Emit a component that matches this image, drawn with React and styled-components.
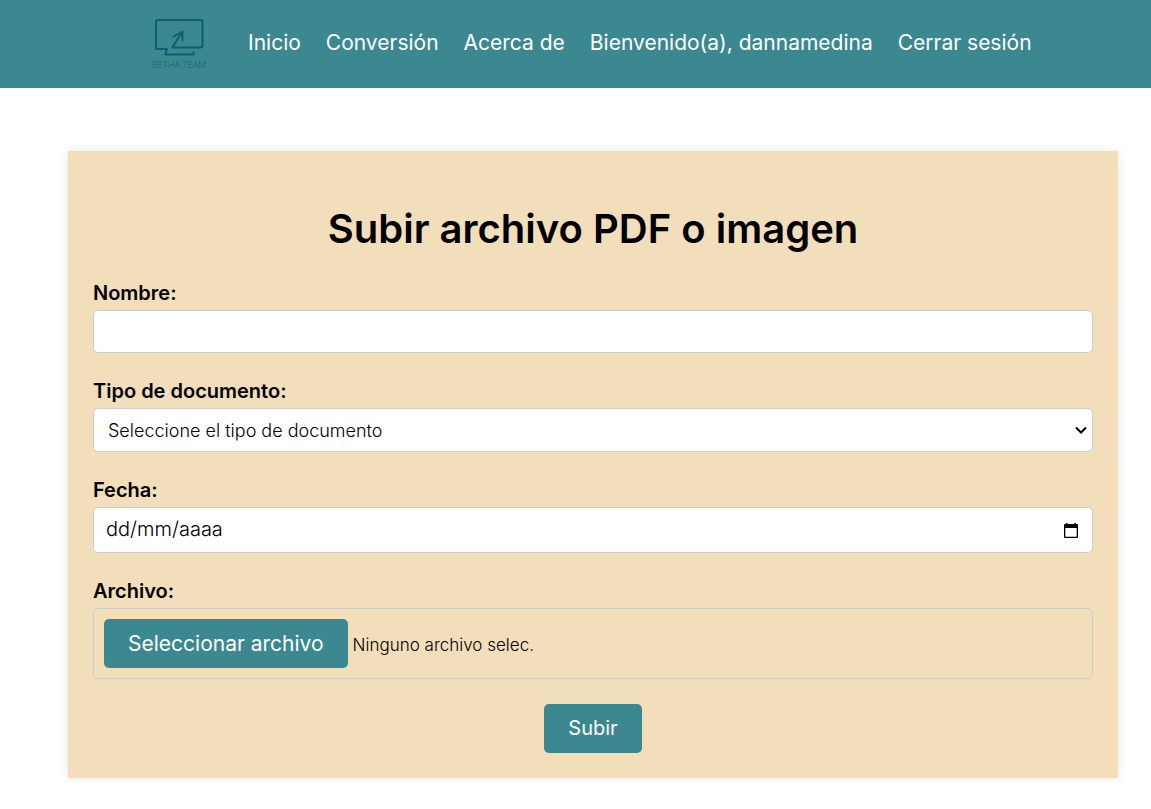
import React, { useState } from "react";
import styled, { createGlobalStyle } from "styled-components";

const teal = "#3b8890";
const sand = "#f2debb";

const GlobalStyle = createGlobalStyle`
  *, *::before, *::after { box-sizing: border-box; }
  body {
    margin: 0;
    background: #fff;
    color: #000;
    font-family: "Century Gothic", Inter, sans-serif;
    font-size: 18px;
  }
  input, select, button { font: inherit; color: inherit; }
`;

const Header = styled.header`
  background: ${teal};
  padding: 18px 100px 18px 152px;
`;

const Nav = styled.nav`
  display: flex;
  align-items: flex-start;
  gap: 42px;
`;

const LogoLink = styled.a`
  display: block;
  flex: none;
  height: 52px;
`;

const Menu = styled.ul`
  display: flex;
  flex-wrap: wrap;
  gap: 25px;
  margin: 0;
  padding: 12px 0 0;
  list-style: none;
`;

const NavLink = styled.a`
  display: block;
  color: #fff;
  font-size: 21px;
  line-height: 26px;
  text-decoration: none;
  white-space: nowrap;
`;

const Card = styled.main`
  margin: 63px 33px 31px 68px;
  padding: 25px;
  background: ${sand};
  box-shadow: 0 0 10px rgba(0, 0, 0, 0.1);
`;

const Title = styled.h1`
  margin: 28px 0 26px;
  font-size: 40px;
  font-weight: 600;
  line-height: 50px;
  text-align: center;
`;

const Form = styled.form`
  display: flex;
  flex-direction: column;
  gap: 25px;
`;

const Field = styled.div`
  display: flex;
  flex-direction: column;
  gap: 4px;
`;

const Label = styled.label`
  font-size: 20px;
  font-weight: 600;
  line-height: 26px;
`;

const Box = styled.div`
  display: flex;
  align-items: center;
  position: relative;
  height: ${(p) => p.$height};
  border: 1px solid #ccc;
  border-radius: 5px;
  background: ${(p) => (p.$clear ? "transparent" : "#fff")};
  padding: ${(p) => p.$padding || "0"};
`;

const TextInput = styled.input`
  flex: 1;
  min-width: 0;
  height: 100%;
  padding: 0 12px 2px;
  border: 0;
  border-radius: 5px;
  background: transparent;
  font-size: 20px;
  font-weight: 300;

  &::placeholder { color: #000; opacity: 1; }
`;

const Select = styled.select`
  flex: 1;
  min-width: 0;
  height: 100%;
  padding: 0 32px 0 14px;
  border: 0;
  border-radius: 5px;
  background: transparent;
  appearance: none;
  font-weight: 300;
`;

const Chevron = styled.svg`
  position: absolute;
  right: 5px;
  top: 15px;
  pointer-events: none;
`;

const IconButton = styled.button`
  display: flex;
  padding: 0;
  margin-right: 14px;
  border: 0;
  background: none;
  cursor: pointer;
`;

const HiddenFile = styled.input`
  position: absolute;
  width: 1px;
  height: 1px;
  opacity: 0;
`;

const FileButton = styled.label`
  padding: 12px 24px;
  border-radius: 5px;
  background: ${teal};
  color: #fff;
  font-size: 21px;
  line-height: 25px;
  cursor: pointer;
`;

const FileStatus = styled.span`
  margin-left: 5px;
  padding-top: 3px;
  font-size: 17px;
  font-weight: 300;
`;

const Submit = styled.button`
  align-self: center;
  padding: 12px 24px;
  border: 0;
  border-radius: 5px;
  background: ${teal};
  color: #fff;
  font-size: 20px;
  line-height: 25px;
  cursor: pointer;
`;

const links = ["Inicio", "Conversión", "Acerca de", "Bienvenido(a), dannamedina", "Cerrar sesión"];

function Logo() {
  return (
    <svg width="54" height="52" viewBox="0 0 54 52" fill="none" stroke="#0c5f70" strokeWidth="2" strokeLinejoin="round" strokeLinecap="round">
      <path d="M20.500 29.500H48.500Q50.500 29.500 50.500 27.500V4Q50.500 2 48.500 2H6Q4 2 4 4V31H15L13.500 36.500H41.500V34.500" />
      <path d="M20.500 29.500 30 14M21.500 18.500 30.500 13.500 30.500 22.500" />
      <text x="27" y="50" textAnchor="middle" fill="#1a6674" stroke="none" fontFamily="Roboto, sans-serif" fontWeight="300" fontSize="9">
        BETHA TEAM
      </text>
    </svg>
  );
}

export default function App() {
  const [file, setFile] = useState("");
  return (
    <>
      <GlobalStyle />
      <Header>
        <Nav>
          <LogoLink href="#" aria-label="Betha Team"><Logo /></LogoLink>
          <Menu>
            {links.map((text) => (
              <li key={text}><NavLink href="#">{text}</NavLink></li>
            ))}
          </Menu>
        </Nav>
      </Header>
      <Card>
        <Title>Subir archivo PDF o imagen</Title>
        <Form onSubmit={(e) => e.preventDefault()}>
          <Field>
            <Label htmlFor="nombre">Nombre:</Label>
            <Box $height="43px"><TextInput id="nombre" type="text" /></Box>
          </Field>
          <Field>
            <Label htmlFor="tipo">Tipo de documento:</Label>
            <Box $height="44px">
              <Select id="tipo" defaultValue="">
                <option value="">Seleccione el tipo de documento</option>
              </Select>
              <Chevron width="12" height="12" viewBox="0 0 12 12" fill="none" stroke="#000" strokeWidth="2">
                <path d="M1 3.500 6 8.500 11 3.500" />
              </Chevron>
            </Box>
          </Field>
          <Field>
            <Label htmlFor="fecha">Fecha:</Label>
            <Box $height="46px">
              <TextInput id="fecha" type="text" placeholder="dd/mm/aaaa" />
              <IconButton type="button" aria-label="Abrir calendario">
                <svg width="14" height="15" viewBox="0 0 14 15">
                  <path fill="#000" fillRule="evenodd" d="M2 0h1.500v1h7V0H12v1h1q1 0 1 1v12q0 1-1 1H1q-1 0-1-1V2q0-1 1-1h1zM1.300 5v8.700h11.400V5z" />
                </svg>
              </IconButton>
            </Box>
          </Field>
          <Field>
            <Label htmlFor="archivo">Archivo:</Label>
            <Box $height="71px" $padding="0 10px" $clear>
              <HiddenFile id="archivo" type="file" onChange={(e) => setFile(e.target.files[0]?.name || "")} />
              <FileButton htmlFor="archivo">Seleccionar archivo</FileButton>
              <FileStatus>{file || "Ninguno archivo selec."}</FileStatus>
            </Box>
          </Field>
          <Submit type="submit">Subir</Submit>
        </Form>
      </Card>
    </>
  );
}
